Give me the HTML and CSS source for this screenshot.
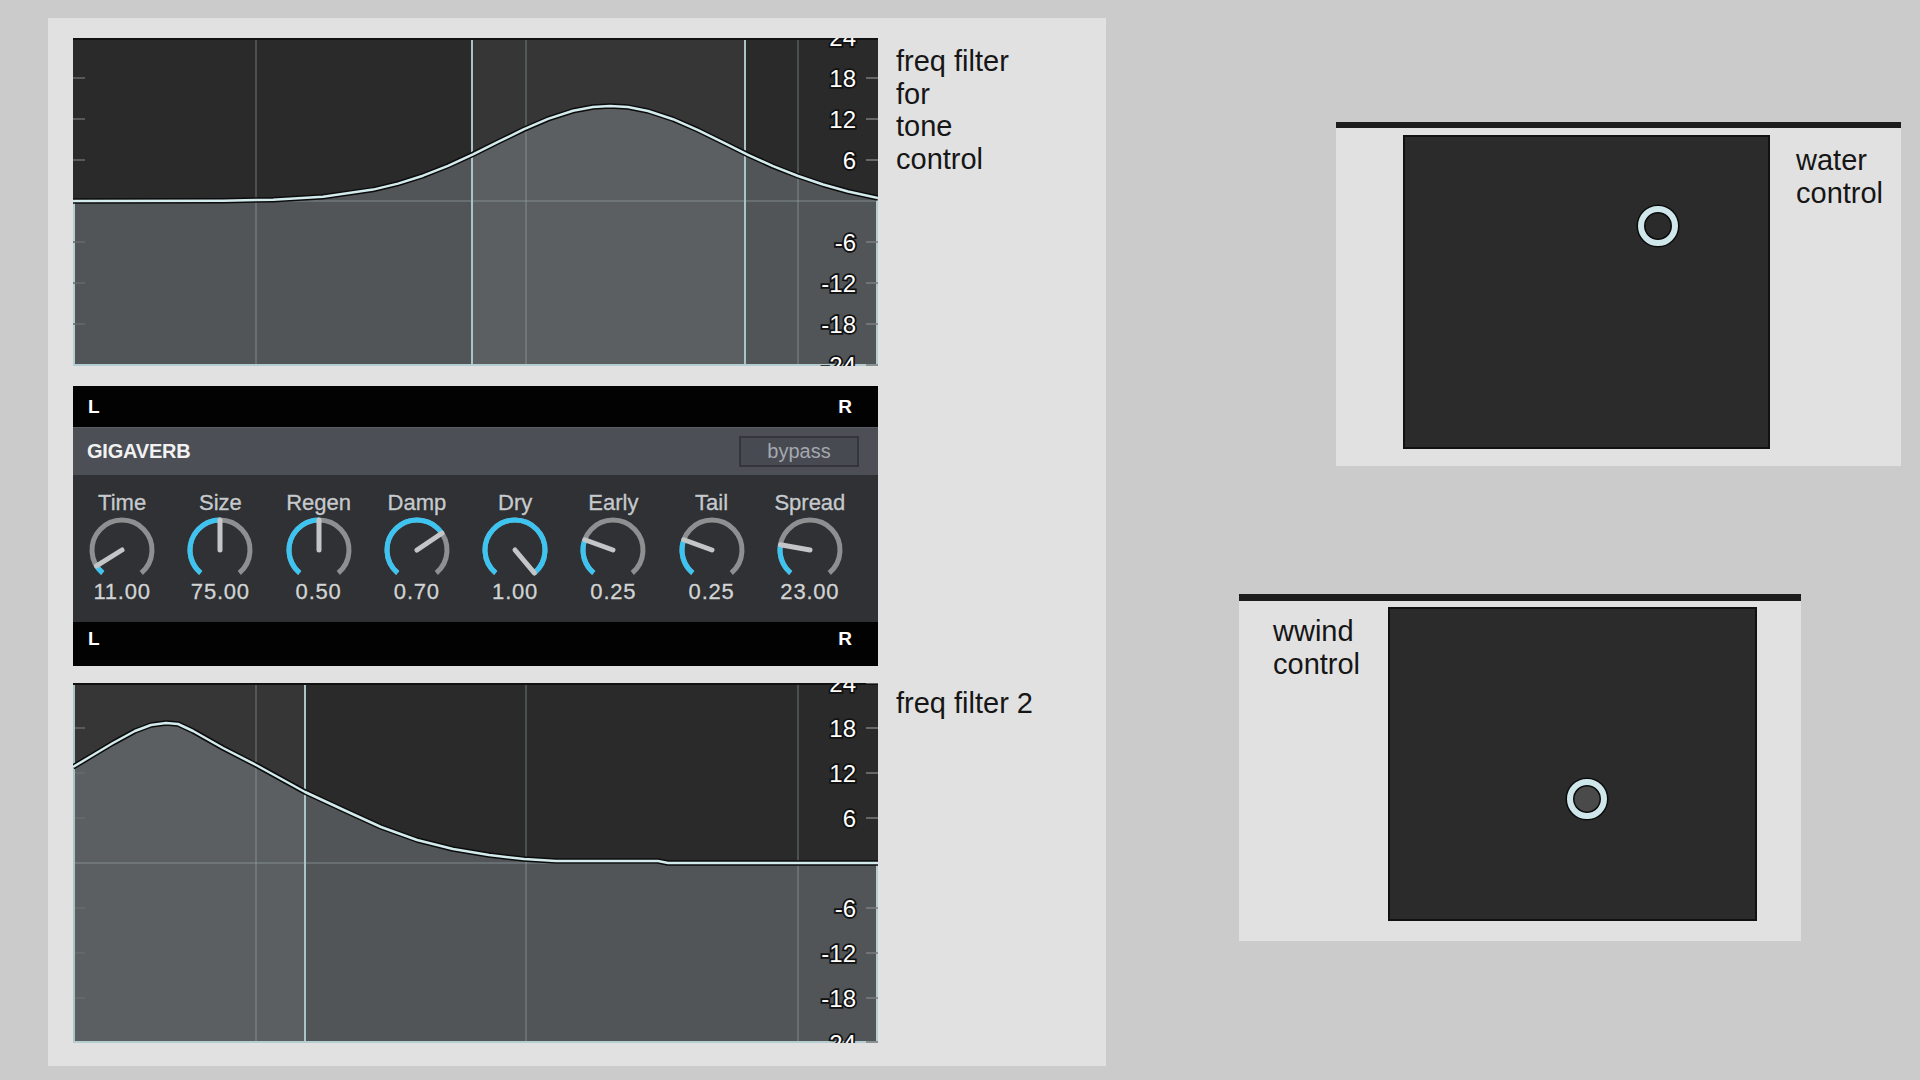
FILE: index.html
```html
<!DOCTYPE html>
<html lang="en">
<head>
<meta charset="utf-8">
<title>Patch presentation</title>
<link rel="stylesheet" href="styles.css">
</head>
<body>
<main class="patch">
  <section class="row row-top">
    <div class="graph">
      <svg class="graph-svg g1" width="805" height="328" viewBox="0 0 805 328">
        <rect x="0" y="0" width="805" height="328" fill="#2a2a2a"/>
        <path d="M0,163 L150,162.7 L200,161.7 L250,158.8 L300,151.6 L325,145.6 L350,137.7 L375,127.8 L400,116.3 L425,103.9 L450,91.7 L475,80.9 L500,72.8 L520,69 L537,68 L555,69.1 L575,73 L600,81.2 L625,92.1 L650,104.4 L675,116.8 L700,128.2 L725,138 L750,146.5 L775,153.5 L805,160 L805,328 L0,328 Z" fill="#515558"/>
        <rect x="399" y="0" width="273" height="328" fill="#ffffff" fill-opacity="0.06"/>
        <g stroke="#a0afb4" stroke-opacity="0.38" stroke-width="1.5">
          <line x1="183" y1="0" x2="183" y2="328"/>
          <line x1="453" y1="0" x2="453" y2="328"/>
          <line x1="725" y1="0" x2="725" y2="328"/>
          <line x1="0" y1="163" x2="805" y2="163"/>
        </g>
        <g stroke="#a9c3c7" stroke-width="2">
          <line x1="399" y1="0" x2="399" y2="328"/>
          <line x1="672" y1="0" x2="672" y2="328"/>
        </g>
        <path d="M1,163 L1,327 L804,327 L804,160" fill="none" stroke="#b3cdd1" stroke-width="2"/>
        <line x1="0" y1="1" x2="805" y2="1" stroke="#111" stroke-width="2"/>
        <g stroke="#686868" stroke-width="1.5">
          <line x1="0" y1="40" x2="12" y2="40"/><line x1="0" y1="81" x2="12" y2="81"/><line x1="0" y1="122" x2="12" y2="122"/>
          <line x1="0" y1="204" x2="12" y2="204"/><line x1="0" y1="245" x2="12" y2="245"/><line x1="0" y1="286" x2="12" y2="286"/>
        </g>
        <g stroke="#7c7c7c" stroke-width="1.5">
          <line x1="793" y1="-1" x2="805" y2="-1"/><line x1="793" y1="40" x2="805" y2="40"/><line x1="793" y1="81" x2="805" y2="81"/><line x1="793" y1="122" x2="805" y2="122"/>
          <line x1="793" y1="204" x2="805" y2="204"/><line x1="793" y1="245" x2="805" y2="245"/><line x1="793" y1="286" x2="805" y2="286"/><line x1="793" y1="327" x2="805" y2="327"/>
        </g>
        <path d="M0,163 L150,162.7 L200,161.7 L250,158.8 L300,151.6 L325,145.6 L350,137.7 L375,127.8 L400,116.3 L425,103.9 L450,91.7 L475,80.9 L500,72.8 L520,69 L537,68 L555,69.1 L575,73 L600,81.2 L625,92.1 L650,104.4 L675,116.8 L700,128.2 L725,138 L750,146.5 L775,153.5 L805,160" fill="none" stroke="#0c0c0c" stroke-width="5.5" stroke-linejoin="round"/>
        <path d="M0,163 L150,162.7 L200,161.7 L250,158.8 L300,151.6 L325,145.6 L350,137.7 L375,127.8 L400,116.3 L425,103.9 L450,91.7 L475,80.9 L500,72.8 L520,69 L537,68 L555,69.1 L575,73 L600,81.2 L625,92.1 L650,104.4 L675,116.8 L700,128.2 L725,138 L750,146.5 L775,153.5 L805,160" fill="none" stroke="#d4ebee" stroke-width="2.5" stroke-linejoin="round"/>
        <g class="axis-text">
          <text x="783" y="7.6">24</text>
          <text x="783" y="48.6">18</text>
          <text x="783" y="89.6">12</text>
          <text x="783" y="130.6">6</text>
          <text x="783" y="212.6">-6</text>
          <text x="783" y="253.6">-12</text>
          <text x="783" y="294.6">-18</text>
          <text x="783" y="335.6">-24</text>
        </g>
      </svg>
    </div>
    <p class="note note-top">freq filter<br>for<br>tone<br>control</p>
  </section>

  <section class="gv">
    <div class="meter meter-top"><span>L</span><span>R</span></div>
    <div class="gv-head">
      <span class="gv-title">GIGAVERB</span>
      <span class="bypass">bypass</span>
    </div>
    <div class="gv-body">
      <div class="knob">
        <div class="k-label">Time</div>
        <svg class="k-dial" width="68" height="68" viewBox="-34 -34 68 68">
          <path class="k-track" d="M-19.28,22.98 A30,30 0 1 1 19.28,22.98"/>
          <path class="k-value" d="M-19.28,22.98 A30,30 0 0 1 -25.44,15.9"/>
          <line class="k-needle" x1="0" y1="0" x2="-25.44" y2="15.9"/>
        </svg>
        <div class="k-val">11.00</div>
      </div>
      <div class="knob">
        <div class="k-label">Size</div>
        <svg class="k-dial" width="68" height="68" viewBox="-34 -34 68 68">
          <path class="k-track" d="M-19.28,22.98 A30,30 0 1 1 19.28,22.98"/>
          <path class="k-value" d="M-19.28,22.98 A30,30 0 0 1 0,-30"/>
          <line class="k-needle" x1="0" y1="0" x2="0" y2="-30"/>
        </svg>
        <div class="k-val">75.00</div>
      </div>
      <div class="knob">
        <div class="k-label">Regen</div>
        <svg class="k-dial" width="68" height="68" viewBox="-34 -34 68 68">
          <path class="k-track" d="M-19.28,22.98 A30,30 0 1 1 19.28,22.98"/>
          <path class="k-value" d="M-19.28,22.98 A30,30 0 0 1 0,-30"/>
          <line class="k-needle" x1="0" y1="0" x2="0" y2="-30"/>
        </svg>
        <div class="k-val">0.50</div>
      </div>
      <div class="knob">
        <div class="k-label">Damp</div>
        <svg class="k-dial" width="68" height="68" viewBox="-34 -34 68 68">
          <path class="k-track" d="M-19.28,22.98 A30,30 0 1 1 19.28,22.98"/>
          <path class="k-value" d="M-19.28,22.98 A30,30 0 1 1 24.87,-16.78"/>
          <line class="k-needle" x1="0" y1="0" x2="24.87" y2="-16.78"/>
        </svg>
        <div class="k-val">0.70</div>
      </div>
      <div class="knob">
        <div class="k-label">Dry</div>
        <svg class="k-dial" width="68" height="68" viewBox="-34 -34 68 68">
          <path class="k-track" d="M-19.28,22.98 A30,30 0 1 1 19.28,22.98"/>
          <path class="k-value" d="M-19.28,22.98 A30,30 0 1 1 19.28,22.98"/>
          <line class="k-needle" x1="0" y1="0" x2="19.28" y2="22.98"/>
        </svg>
        <div class="k-val">1.00</div>
      </div>
      <div class="knob">
        <div class="k-label">Early</div>
        <svg class="k-dial" width="68" height="68" viewBox="-34 -34 68 68">
          <path class="k-track" d="M-19.28,22.98 A30,30 0 1 1 19.28,22.98"/>
          <path class="k-value" d="M-19.28,22.98 A30,30 0 0 1 -28.19,-10.26"/>
          <line class="k-needle" x1="0" y1="0" x2="-28.19" y2="-10.26"/>
        </svg>
        <div class="k-val">0.25</div>
      </div>
      <div class="knob">
        <div class="k-label">Tail</div>
        <svg class="k-dial" width="68" height="68" viewBox="-34 -34 68 68">
          <path class="k-track" d="M-19.28,22.98 A30,30 0 1 1 19.28,22.98"/>
          <path class="k-value" d="M-19.28,22.98 A30,30 0 0 1 -28.19,-10.26"/>
          <line class="k-needle" x1="0" y1="0" x2="-28.19" y2="-10.26"/>
        </svg>
        <div class="k-val">0.25</div>
      </div>
      <div class="knob">
        <div class="k-label">Spread</div>
        <svg class="k-dial" width="68" height="68" viewBox="-34 -34 68 68">
          <path class="k-track" d="M-19.28,22.98 A30,30 0 1 1 19.28,22.98"/>
          <path class="k-value" d="M-19.28,22.98 A30,30 0 0 1 -29.54,-5.21"/>
          <line class="k-needle" x1="0" y1="0" x2="-29.54" y2="-5.21"/>
        </svg>
        <div class="k-val">23.00</div>
      </div>
    </div>
    <div class="meter meter-bottom"><span>L</span><span>R</span></div>
  </section>

  <section class="row row-bottom">
    <div class="graph">
      <svg class="graph-svg g2" width="805" height="360" viewBox="0 0 805 360">
        <rect x="0" y="0" width="805" height="360" fill="#2a2a2a"/>
        <path d="M0,84 L20,72 L40,60 L62,48 L78,42 L93,40 L105,41 L120,48 L150,65 L183,82 L232,109 L273,128 L308,144 L344,157 L380,166 L416,172 L451,176 L483,178 L585,178 L595,180 L805,180 L805,360 L0,360 Z" fill="#515558"/>
        <rect x="0" y="0" width="232" height="360" fill="#ffffff" fill-opacity="0.06"/>
        <g stroke="#a0afb4" stroke-opacity="0.38" stroke-width="1.5">
          <line x1="183" y1="0" x2="183" y2="360"/>
          <line x1="453" y1="0" x2="453" y2="360"/>
          <line x1="725" y1="0" x2="725" y2="360"/>
          <line x1="0" y1="180" x2="805" y2="180"/>
        </g>
        <g stroke="#a9c3c7" stroke-width="2">
          <line x1="232" y1="0" x2="232" y2="360"/>
          <line x1="1" y1="0" x2="1" y2="360"/>
        </g>
        <path d="M804,180 L804,359 L0,359" fill="none" stroke="#b3cdd1" stroke-width="2"/>
        <line x1="0" y1="1" x2="805" y2="1" stroke="#111" stroke-width="2"/>
        <g stroke="#686868" stroke-width="1.5">
          <line x1="2" y1="45" x2="12" y2="45"/><line x1="2" y1="90" x2="12" y2="90"/><line x1="2" y1="135" x2="12" y2="135"/>
          <line x1="2" y1="225" x2="12" y2="225"/><line x1="2" y1="270" x2="12" y2="270"/><line x1="2" y1="315" x2="12" y2="315"/>
        </g>
        <g stroke="#7c7c7c" stroke-width="1.5">
          <line x1="793" y1="0" x2="805" y2="0"/><line x1="793" y1="45" x2="805" y2="45"/><line x1="793" y1="90" x2="805" y2="90"/><line x1="793" y1="135" x2="805" y2="135"/>
          <line x1="793" y1="225" x2="805" y2="225"/><line x1="793" y1="270" x2="805" y2="270"/><line x1="793" y1="315" x2="805" y2="315"/><line x1="793" y1="359" x2="805" y2="359"/>
        </g>
        <path d="M0,84 L20,72 L40,60 L62,48 L78,42 L93,40 L105,41 L120,48 L150,65 L183,82 L232,109 L273,128 L308,144 L344,157 L380,166 L416,172 L451,176 L483,178 L585,178 L595,180 L805,180" fill="none" stroke="#0c0c0c" stroke-width="5.5" stroke-linejoin="round"/>
        <path d="M0,84 L20,72 L40,60 L62,48 L78,42 L93,40 L105,41 L120,48 L150,65 L183,82 L232,109 L273,128 L308,144 L344,157 L380,166 L416,172 L451,176 L483,178 L585,178 L595,180 L805,180" fill="none" stroke="#d4ebee" stroke-width="2.5" stroke-linejoin="round"/>
        <g class="axis-text">
          <text x="783" y="8.6">24</text>
          <text x="783" y="53.6">18</text>
          <text x="783" y="98.6">12</text>
          <text x="783" y="143.6">6</text>
          <text x="783" y="233.6">-6</text>
          <text x="783" y="278.6">-12</text>
          <text x="783" y="323.6">-18</text>
          <text x="783" y="368.6">-24</text>
        </g>
      </svg>
    </div>
    <p class="note note-bottom">freq filter 2</p>
  </section>
</main>

<aside class="controls">
  <section class="xy xy-water">
    <div class="pad">
      <span class="handle handle-hollow"></span>
    </div>
    <p class="note xy-note-water">water<br>control</p>
  </section>
  <section class="xy xy-wind">
    <p class="note xy-note-wind">wwind<br>control</p>
    <div class="pad">
      <span class="handle handle-filled"></span>
    </div>
  </section>
</aside>
</body>
</html>
```

FILE: styles.css
```css
* { box-sizing: border-box; }

html, body {
  margin: 0;
  padding: 0;
}

body {
  width: 1920px;
  height: 1080px;
  overflow: hidden;
  background: #cbcbcb;
  font-family: "Liberation Sans", Arial, Helvetica, sans-serif;
  display: flex;
  align-items: flex-start;
  padding: 18px 0 0 48px;
}

/* ---------- left patch panel ---------- */
.patch {
  width: 1058px;
  height: 1048px;
  background: #e1e1e1;
  padding: 20px 0 0 25px;
  display: flex;
  flex-direction: column;
  flex: none;
}

.row {
  display: flex;
  align-items: flex-start;
}

.graph { flex: none; }

.graph-svg {
  display: block;
  overflow: hidden;
}

.axis-text text {
  font-family: "Liberation Sans", Arial, sans-serif;
  font-size: 24px;
  fill: #ffffff;
  stroke: #111111;
  stroke-width: 3.5px;
  paint-order: stroke;
  text-anchor: end;
}

.note {
  margin: 0;
  font-size: 29px;
  line-height: 32.5px;
  color: #161616;
}

.note-top { margin: 7px 0 0 18px; }
.note-bottom { margin: 4px 0 0 18px; }

/* ---------- gigaverb ---------- */
.gv {
  width: 805px;
  margin-top: 20px;
  display: flex;
  flex-direction: column;
}

.row-bottom { margin-top: 17px; }

.meter {
  background: #020202;
  display: flex;
  justify-content: space-between;
  color: #ffffff;
  font-weight: 700;
  font-size: 19px;
  line-height: 22px;
  padding: 0 26px 0 15px;
}

.meter-top {
  height: 41px;
  align-items: center;
}

.meter-bottom {
  height: 44px;
  align-items: flex-start;
  padding-top: 6px;
}

.gv-head {
  height: 48px;
  background: #4c4f56;
  border-top: 1px solid #5a5d64;
  display: flex;
  align-items: center;
  justify-content: space-between;
  padding: 0 19px 0 14px;
}

.gv-title {
  color: #f2f2f2;
  font-weight: 700;
  font-size: 20px;
  letter-spacing: -0.2px;
}

.bypass {
  width: 120px;
  height: 31px;
  background: #474a51;
  border: 2px solid #34363b;
  color: #a4a8ae;
  font-size: 20px;
  line-height: 27px;
  text-align: center;
}

.gv-body {
  height: 147px;
  background: #2f3134;
  display: grid;
  grid-template-columns: repeat(8, 98.25px);
  padding-top: 16px;
}

.knob {
  display: flex;
  flex-direction: column;
  align-items: center;
}

.k-label {
  font-size: 22px;
  line-height: 24px;
  color: #c6cace;
  -webkit-text-stroke: 0.4px #c6cace;
  text-shadow: 0 0 1px #000;
}

.k-dial {
  display: block;
  margin-top: 1px;
}

.k-track {
  fill: none;
  stroke: #8d8f91;
  stroke-width: 5;
}

.k-value {
  fill: none;
  stroke: #3ec4f0;
  stroke-width: 5;
}

.k-needle {
  stroke: #c4c5c6;
  stroke-width: 5;
  stroke-linecap: round;
}

.k-val {
  margin-top: -4px;
  font-size: 22px;
  line-height: 24px;
  letter-spacing: 0.8px;
  color: #d2d4d6;
  -webkit-text-stroke: 0.4px #d2d4d6;
  text-shadow: 0 0 1px #000;
}

/* ---------- right XY controls ---------- */
.controls {
  display: flex;
  flex-direction: column;
  align-items: flex-start;
  margin-left: 133px;
  flex: none;
}

.xy {
  background: #e1e1e1;
  display: flex;
  align-items: flex-start;
}

.xy-water {
  margin-top: 104px;
  margin-left: 97px;
  width: 565px;
  height: 344px;
  border-top: 6px solid #1d1d1d;
  padding: 7px 0 0 67px;
}

.xy-wind {
  margin-top: 128px;
  width: 562px;
  height: 347px;
  border-top: 7px solid #1d1d1d;
  padding: 6px 0 0 34px;
}

.pad {
  position: relative;
  width: 367px;
  height: 314px;
  background: #2b2b2b;
  border: 2px solid #111111;
  flex: none;
}

.xy-wind .pad { width: 369px; }

.xy-note-water {
  margin: 9px 0 0 26px;
}

.xy-note-wind {
  width: 115px;
  margin-top: 8px;
  flex: none;
}

.handle {
  position: absolute;
  width: 40px;
  height: 40px;
  border-radius: 50%;
  border: 6px solid #cfe7eb;
  box-shadow: 0 0 0 1.5px #0b0b0b, inset 0 0 0 1.5px #0b0b0b;
}

.handle-hollow {
  left: 233px;
  top: 69px;
  background: #2b2b2b;
}

.handle-filled {
  left: 177px;
  top: 170px;
  background: #4a4a4a;
}
```
